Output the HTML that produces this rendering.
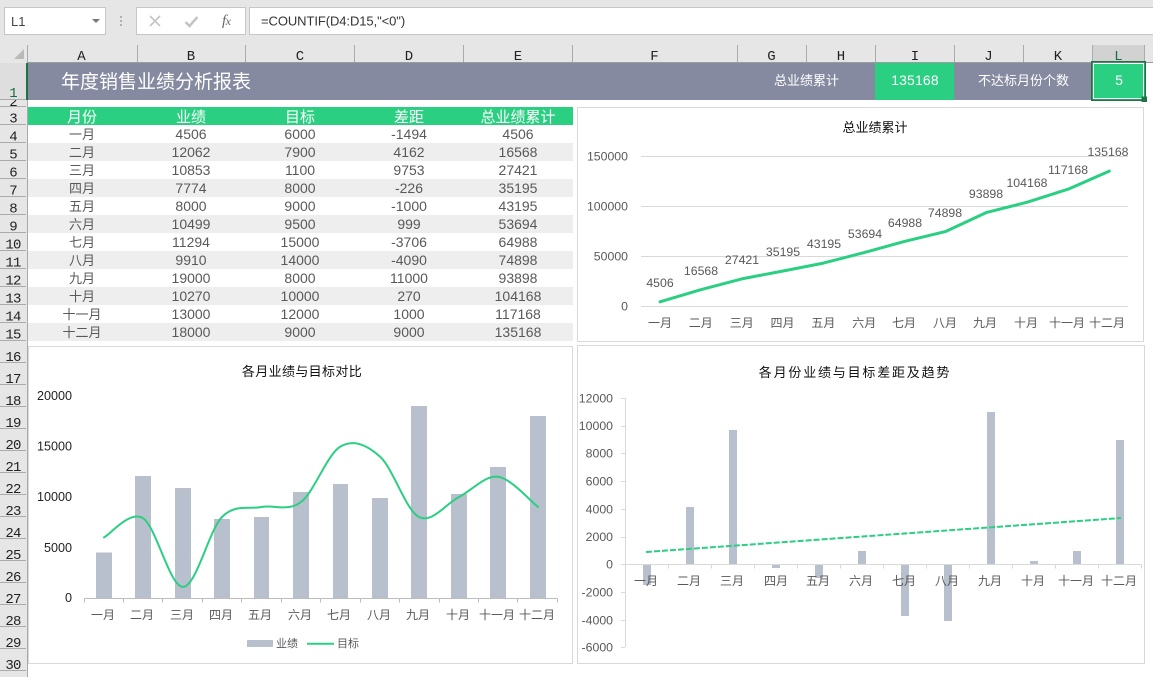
<!DOCTYPE html>
<html lang="zh"><head><meta charset="utf-8"><title>年度销售业绩分析报表</title>
<style>
html,body{margin:0;padding:0;background:#fff;width:1153px;height:677px;overflow:hidden}
svg{display:block}
text{font-family:"Liberation Sans","Noto Sans CJK SC",sans-serif}
.m text,text.m{font-family:"Liberation Mono","Liberation Serif",monospace;font-size:14px;letter-spacing:-.8px;fill:#222;text-anchor:middle}
.t text{font-size:14px;fill:#595959;text-anchor:middle}
.t text.c{font-size:13px}
.h text{font-size:15px;fill:#fff;text-anchor:middle}
.x text{font-size:12px;fill:#595959;text-anchor:middle}
.y text{font-size:12.3px;fill:#595959;text-anchor:end}
.d text{font-size:12.3px;fill:#595959;text-anchor:middle}
</style></head><body>
<svg width="1153" height="677" viewBox="0 0 1153 677" xmlns="http://www.w3.org/2000/svg">
<!-- toolbar -->
<rect x="0" y="0" width="1153" height="63" fill="#e6e6e6"/>
<rect x="4.500" y="7.500" width="101" height="27" fill="#fff" stroke="#c6c6c6"/>
<text x="11" y="26" font-size="13" fill="#444">L1</text>
<path d="M92 19h8l-4 4z" fill="#777"/>
<g fill="#b0b0b0"><rect x="120" y="16" width="2" height="2"/><rect x="120" y="20" width="2" height="2"/><rect x="120" y="24" width="2" height="2"/></g>
<rect x="136.500" y="7.500" width="109" height="27" fill="#fff" stroke="#c6c6c6"/>
<path d="M150 16l10 10M160 16l-10 10" stroke="#c4c4c4" stroke-width="1.600" fill="none"/>
<path d="M185.500 22l4 4 8-9" stroke="#c4c4c4" stroke-width="2.500" fill="none"/>
<text x="222" y="25" font-size="15" font-style="italic" fill="#666" style="font-family:'Liberation Serif',serif" letter-spacing="-.5">f<tspan font-size="12">x</tspan></text>
<rect x="249.500" y="7.500" width="905" height="27" fill="#fff" stroke="#c6c6c6"/>
<text x="261" y="25.500" font-size="13" fill="#333" letter-spacing="-.08">=COUNTIF(D4:D15,"&lt;0")</text>
<!-- column headers -->
<rect x="1092" y="45" width="52" height="17" fill="#d2d2d2"/>
<path d="M24 49v10H14z" fill="#b9b9b9"/>
<g stroke="#ababab" stroke-width="1"><path d="M27.500 45v18M137.500 45v18M245.500 45v18M354.500 45v18M463.500 45v18M572.500 45v18M737.500 45v18M806.500 45v18M875.500 45v18M954.500 45v18M1023.500 45v18M1092.500 45v18M1144.500 45v18"/></g>
<rect x="27" y="62" width="1126" height="1" fill="#9c9c9c"/>
<g class="m">
<text x="81" y="60">A</text><text x="190.500" y="60">B</text><text x="299.500" y="60">C</text><text x="408.500" y="60">D</text><text x="517.500" y="60">E</text><text x="654" y="60">F</text><text x="771" y="60">G</text><text x="840.500" y="60">H</text><text x="914.500" y="60">I</text><text x="988" y="60">J</text><text x="1057.500" y="60">K</text><text x="1118" y="60" style="fill:#1d6b40">L</text>
</g>
<!-- row headers -->
<rect x="0" y="63" width="27" height="614" fill="#e6e6e6"/>
<rect x="0" y="63" width="26" height="37" fill="#dedede"/>
<rect x="27" y="63" width="1" height="614" fill="#a8a8a8"/>
<rect x="26" y="63" width="2" height="37" fill="#217346"/>
<g stroke="#ababab" stroke-width="1"><path d="M0 99.500h26M0 106.500h26M0 124.500h26M0 142.500h26M0 160.500h26M0 178.500h26M0 196.500h26M0 214.500h26M0 232.500h26M0 250.500h26M0 268.500h26M0 286.500h26M0 304.500h26M0 322.500h26M0 340.500h26M0 362.500h26M0 384.500h26M0 406.500h26M0 428.500h26M0 450.500h26M0 472.500h26M0 494.500h26M0 516.500h26M0 538.500h26M0 560.500h26M0 582.500h26M0 604.500h26M0 626.500h26M0 648.500h26M0 670.500h26"/></g>
<svg x="0" y="100" width="26" height="6" viewBox="0 100 26 6"><text class="m" x="13" y="106">2</text></svg>
<g class="m">
<text x="13" y="97" style="fill:#1d6b40">1</text>
<text x="13" y="122.500">3</text><text x="13" y="140.500">4</text><text x="13" y="158.500">5</text><text x="13" y="176.500">6</text><text x="13" y="194.500">7</text><text x="13" y="212.500">8</text><text x="13" y="230.500">9</text><text x="13" y="248.500">10</text><text x="13" y="266.500">11</text><text x="13" y="284.500">12</text><text x="13" y="302.500">13</text><text x="13" y="320.500">14</text><text x="13" y="338.500">15</text>
<text x="13" y="361">16</text><text x="13" y="383">17</text><text x="13" y="405">18</text><text x="13" y="427">19</text><text x="13" y="449">20</text><text x="13" y="471">21</text><text x="13" y="493">22</text><text x="13" y="515">23</text><text x="13" y="537">24</text><text x="13" y="559">25</text><text x="13" y="581">26</text><text x="13" y="603">27</text><text x="13" y="625">28</text><text x="13" y="647">29</text><text x="13" y="669">30</text>
</g>
<!-- title band -->
<rect x="28" y="63" width="1116" height="37" fill="#858aa0"/>
<text x="61" y="88" font-size="19" fill="#fff">年度销售业绩分析报表</text>
<text x="774" y="85" font-size="13" fill="#fff">总业绩累计</text>
<rect x="875" y="63" width="79" height="37" fill="#2bcf82"/>
<text x="915" y="85" font-size="14" fill="#fff" text-anchor="middle" letter-spacing=".15">135168</text>
<text x="978" y="85" font-size="13" fill="#fff">不达标月份个数</text>
<rect x="1092" y="63" width="53" height="37" fill="#2bcf82"/>
<rect x="1091.750" y="61.750" width="53.500" height="38.500" fill="none" stroke="#217346" stroke-width="1.500"/>
<rect x="1093.500" y="63.500" width="50" height="35" fill="none" stroke="#fff" stroke-width="1"/>
<text x="1119" y="85" font-size="14" fill="#fff" text-anchor="middle">5</text>
<rect x="1141.500" y="96.500" width="5.500" height="5.500" fill="#217346"/>
<!-- table -->
<rect x="28" y="107" width="545" height="18" fill="#2bcf82"/>
<g fill="#eeeeee"><rect x="28" y="143" width="545" height="18"/><rect x="28" y="179" width="545" height="18"/><rect x="28" y="215" width="545" height="18"/><rect x="28" y="251" width="545" height="18"/><rect x="28" y="287" width="545" height="18"/><rect x="28" y="323" width="545" height="18"/></g>
<g class="h"><text x="82" y="122">月份</text><text x="191" y="122">业绩</text><text x="300" y="122">目标</text><text x="409" y="122">差距</text><text x="518" y="122">总业绩累计</text></g>
<g class="t">
<text class="c" x="82" y="139">一月</text><text x="191" y="139">4506</text><text x="300" y="139">6000</text><text x="409" y="139">-1494</text><text x="518" y="139">4506</text>
<text class="c" x="82" y="157">二月</text><text x="191" y="157">12062</text><text x="300" y="157">7900</text><text x="409" y="157">4162</text><text x="518" y="157">16568</text>
<text class="c" x="82" y="175">三月</text><text x="191" y="175">10853</text><text x="300" y="175">1100</text><text x="409" y="175">9753</text><text x="518" y="175">27421</text>
<text class="c" x="82" y="193">四月</text><text x="191" y="193">7774</text><text x="300" y="193">8000</text><text x="409" y="193">-226</text><text x="518" y="193">35195</text>
<text class="c" x="82" y="211">五月</text><text x="191" y="211">8000</text><text x="300" y="211">9000</text><text x="409" y="211">-1000</text><text x="518" y="211">43195</text>
<text class="c" x="82" y="229">六月</text><text x="191" y="229">10499</text><text x="300" y="229">9500</text><text x="409" y="229">999</text><text x="518" y="229">53694</text>
<text class="c" x="82" y="247">七月</text><text x="191" y="247">11294</text><text x="300" y="247">15000</text><text x="409" y="247">-3706</text><text x="518" y="247">64988</text>
<text class="c" x="82" y="265">八月</text><text x="191" y="265">9910</text><text x="300" y="265">14000</text><text x="409" y="265">-4090</text><text x="518" y="265">74898</text>
<text class="c" x="82" y="283">九月</text><text x="191" y="283">19000</text><text x="300" y="283">8000</text><text x="409" y="283">11000</text><text x="518" y="283">93898</text>
<text class="c" x="82" y="301">十月</text><text x="191" y="301">10270</text><text x="300" y="301">10000</text><text x="409" y="301">270</text><text x="518" y="301">104168</text>
<text class="c" x="82" y="319">十一月</text><text x="191" y="319">13000</text><text x="300" y="319">12000</text><text x="409" y="319">1000</text><text x="518" y="319">117168</text>
<text class="c" x="82" y="337">十二月</text><text x="191" y="337">18000</text><text x="300" y="337">9000</text><text x="409" y="337">9000</text><text x="518" y="337">135168</text>
</g>
<!-- chart 1 -->
<rect x="577.500" y="107.500" width="566" height="234" fill="#fff" stroke="#d9d9d9"/>
<text x="875" y="132" font-size="13" fill="#111" text-anchor="middle">总业绩累计</text>
<g stroke="#d9d9d9"><path d="M641 156.500H1128M641 206.500H1128M641 256.500H1128M641 306.500H1128"/></g>
<g class="y"><text x="628" y="160.500">150000</text><text x="628" y="210.500">100000</text><text x="628" y="260.500">50000</text><text x="628" y="310.500">0</text></g>
<polyline points="660,301.800 700.800,289.700 741.700,278.900 782.500,271.100 823.400,263.100 864.200,252.600 905,241.300 945.900,231.400 986.700,212.400 1027.600,202.100 1068.400,189.100 1109.300,171.100" fill="none" stroke="#2bcf82" stroke-width="3" stroke-linecap="round" stroke-linejoin="round"/>
<g class="d"><text x="660" y="287">4506</text><text x="701" y="275">16568</text><text x="742" y="264">27421</text><text x="783" y="256">35195</text><text x="824" y="248">43195</text><text x="865" y="238">53694</text><text x="905" y="227">64988</text><text x="945" y="217">74898</text><text x="986" y="198">93898</text><text x="1027" y="187">104168</text><text x="1068" y="174">117168</text><text x="1108" y="156">135168</text></g>
<g class="x"><text x="660" y="327">一月</text><text x="700.800" y="327">二月</text><text x="741.700" y="327">三月</text><text x="782.500" y="327">四月</text><text x="823.400" y="327">五月</text><text x="864.200" y="327">六月</text><text x="904" y="327">七月</text><text x="945" y="327">八月</text><text x="985" y="327">九月</text><text x="1026" y="327">十月</text><text x="1067" y="327">十一月</text><text x="1107" y="327">十二月</text></g>
<!-- chart 2 -->
<rect x="28.500" y="346.500" width="544" height="317" fill="#fff" stroke="#d9d9d9"/>
<text x="302" y="376" font-size="13" fill="#111" text-anchor="middle" letter-spacing=".35">各月业绩与目标对比</text>
<g class="y"><text x="72" y="400" style="fill:#222;font-size:12.600px">20000</text><text x="72" y="450.500" style="fill:#222;font-size:12.600px">15000</text><text x="72" y="501" style="fill:#222;font-size:12.600px">10000</text><text x="72" y="552" style="fill:#222;font-size:12.600px">5000</text><text x="72" y="602" style="fill:#222;font-size:12.600px">0</text></g>
<g fill="#b8bfcd"><rect x="96" y="552.500" width="16" height="46"/><rect x="135" y="476" width="16" height="122.500"/><rect x="175" y="488" width="16" height="110.500"/><rect x="214" y="519" width="16" height="79.500"/><rect x="254" y="517" width="15" height="81.500"/><rect x="293" y="492" width="16" height="106.500"/><rect x="333" y="484" width="15" height="114.500"/><rect x="372" y="498" width="16" height="100.500"/><rect x="411" y="406" width="16" height="192.500"/><rect x="451" y="494" width="16" height="104.500"/><rect x="490" y="467" width="16" height="131.500"/><rect x="530" y="416" width="16" height="182.500"/></g>
<path d="M84.500 598.500H557.500M84.500 598.500v4M123.500 598.500v4M162.500 598.500v4M202.500 598.500v4M241.500 598.500v4M281.500 598.500v4M320.500 598.500v4M360.500 598.500v4M399.500 598.500v4M439.500 598.500v4M478.500 598.500v4M517.500 598.500v4M557.500 598.500v4" stroke="#bdbdbd" fill="none"/>
<path d="M104 537.400C110.500 534.200 129.800 510 143 518.200C156.200 526.450 169.800 587.100 183 586.900C196.200 586.700 208.900 530.300 222 517C235.100 503.700 248.300 509.500 261.500 507C274.700 504.500 287.800 512.100 301 502C314.200 491.900 327.300 454.100 340.500 446.500C353.700 438.900 366.900 444.850 380 456.600C393.100 468.350 405.800 510.300 419 517C432.200 523.700 445.800 503.700 459 497C472.200 490.300 484.800 475.100 498 476.800C511.200 478.500 531.300 502 538 507" fill="none" stroke="#2bcf82" stroke-width="2" stroke-linecap="round"/>
<g class="x"><text x="103" y="619">一月</text><text x="142" y="619">二月</text><text x="182" y="619">三月</text><text x="221" y="619">四月</text><text x="260" y="619">五月</text><text x="300" y="619">六月</text><text x="339" y="619">七月</text><text x="379" y="619">八月</text><text x="418" y="619">九月</text><text x="458" y="619">十月</text><text x="497" y="619">十一月</text><text x="537" y="619">十二月</text></g>
<rect x="247" y="640" width="26" height="7" fill="#b8bfcd"/>
<text x="276" y="647" font-size="11" fill="#595959">业绩</text>
<path d="M307 643.700H334" stroke="#2bcf82" stroke-width="2"/>
<text x="337" y="647" font-size="11" fill="#595959">目标</text>
<!-- chart 3 -->
<rect x="577.500" y="345.500" width="567" height="318" fill="#fff" stroke="#d9d9d9"/>
<text x="855" y="377" font-size="13" fill="#111" text-anchor="middle" letter-spacing="1.800">各月份业绩与目标差距及趋势</text>
<g class="y"><text x="613" y="402.700">12000</text><text x="613" y="430">10000</text><text x="613" y="457.400">8000</text><text x="613" y="485.400">6000</text><text x="613" y="513.400">4000</text><text x="613" y="541">2000</text><text x="613" y="568.400">0</text><text x="613" y="596.400">-2000</text><text x="613" y="624.400">-4000</text><text x="613" y="651.400">-6000</text></g>
<path d="M625.500 398v249M621 398.500h4M621 426.500h4M621 453.500h4M621 481.500h4M621 509.500h4M621 537.500h4M621 564.500h4M621 592.500h4M621 620.500h4M621 647.500h4" stroke="#d9d9d9" fill="none"/>
<g fill="#b8bfcd"><rect x="643" y="565" width="8" height="20"/><rect x="686" y="507" width="8" height="57.500"/><rect x="729" y="430" width="8" height="134.500"/><rect x="772" y="565" width="8" height="3"/><rect x="815" y="565" width="8" height="13"/><rect x="858" y="551" width="8" height="13.500"/><rect x="901" y="565" width="8" height="51"/><rect x="944" y="565" width="8" height="56"/><rect x="987" y="412" width="8" height="152.500"/><rect x="1030" y="561" width="8" height="3.500"/><rect x="1073" y="551" width="8" height="13.500"/><rect x="1116" y="440" width="8" height="124.500"/></g>
<path d="M625.500 564.500H1141.500M668.500 564.500v4M711.500 564.500v4M754.500 564.500v4M797.500 564.500v4M840.500 564.500v4M883.500 564.500v4M926.500 564.500v4M969.500 564.500v4M1012.500 564.500v4M1055.500 564.500v4M1098.500 564.500v4M1141.500 564.500v4" stroke="#d9d9d9" fill="none"/>
<path d="M646 552L1121 518" stroke="#2bcf82" stroke-width="2" stroke-dasharray="6 2" fill="none"/>
<g class="x"><text x="646" y="585">一月</text><text x="689" y="585">二月</text><text x="732" y="585">三月</text><text x="776" y="585">四月</text><text x="818" y="585">五月</text><text x="861" y="585">六月</text><text x="904" y="585">七月</text><text x="947" y="585">八月</text><text x="990" y="585">九月</text><text x="1033" y="585">十月</text><text x="1076" y="585">十一月</text><text x="1119" y="585">十二月</text></g>
</svg>
</body></html>
